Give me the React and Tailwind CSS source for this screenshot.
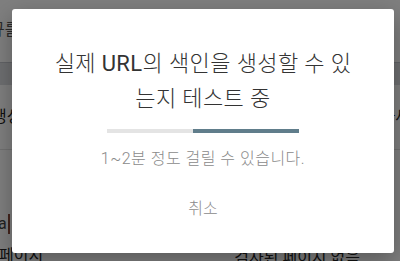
import React from 'react';

export default function App() {
  const font = { fontFamily: 'Roboto, "Noto Sans CJK KR", sans-serif' };

  return (
    <div className="relative w-[400px] h-[261px] overflow-hidden bg-white text-[#202124]" style={font}>
      {/* page behind the dialog */}
      <div className="flex flex-col">
        <div className="h-[62px] flex items-start pt-[20px]">
          <span className="-ml-[10px] text-[16px] leading-[20px] text-[#555]">규를</span>
        </div>
        <div className="h-[23px] bg-[#dcdee3] border-t border-[#c4c6cc]" />
        <div className="h-[65px] flex items-center justify-between border-b border-[#e3e3e3]">
          <span className="-ml-[8px] text-[16px] text-[#222]">생성</span>
          <span className="-mr-[10px] text-[16px] text-[#222]">자세</span>
        </div>
        <div className="h-[64px]" />
        <div className="h-[20px] flex items-center">
          <span className="-ml-[2px] text-[16px] leading-[20px] text-[#444] pr-[1px] border-r-2 border-[#8a4a3a]">a</span>
        </div>
        <div className="h-[12px]" />
        <div className="flex items-start justify-between pr-[40px]">
          <span className="-ml-[1px] text-[16px] leading-[20px] text-[#222]">페이지</span>
          <span className="text-[16px] leading-[20px] text-[#222] pt-[2px]">검사된 페이지 없음</span>
        </div>
      </div>

      {/* scrim */}
      <div className="absolute inset-0 bg-black/50" />

      {/* dialog */}
      <div className="absolute left-[12px] top-[9px] w-[382px] h-[244px] bg-white rounded-[3px] shadow-[0_8px_24px_rgba(0,0,0,0.3)] flex flex-col items-center pt-[37px]">
        <h2 className="text-[22px] leading-[35px] tracking-[0.4px] text-[#333] text-center font-light">
          실제 <span className="font-normal">URL</span>의 색인을 생성할 수 있<br />는지 테스트 중
        </h2>
        <div className="mt-[13px] w-[192px] h-[4px] flex">
          <div className="w-[86px] bg-[#e4e4e4]" />
          <div className="flex-1 bg-[#607d8b]" />
        </div>
        <p className="mt-[16px] text-[16px] leading-[20px] tracking-[0.5px] text-[#8a8a8a] font-light">1~2분 정도 걸릴 수 있습니다.</p>
        <button className="mt-[22px] h-[36px] px-4 text-[16px] text-[#8a8a8a] font-light">취소</button>
      </div>
    </div>
  );
}
